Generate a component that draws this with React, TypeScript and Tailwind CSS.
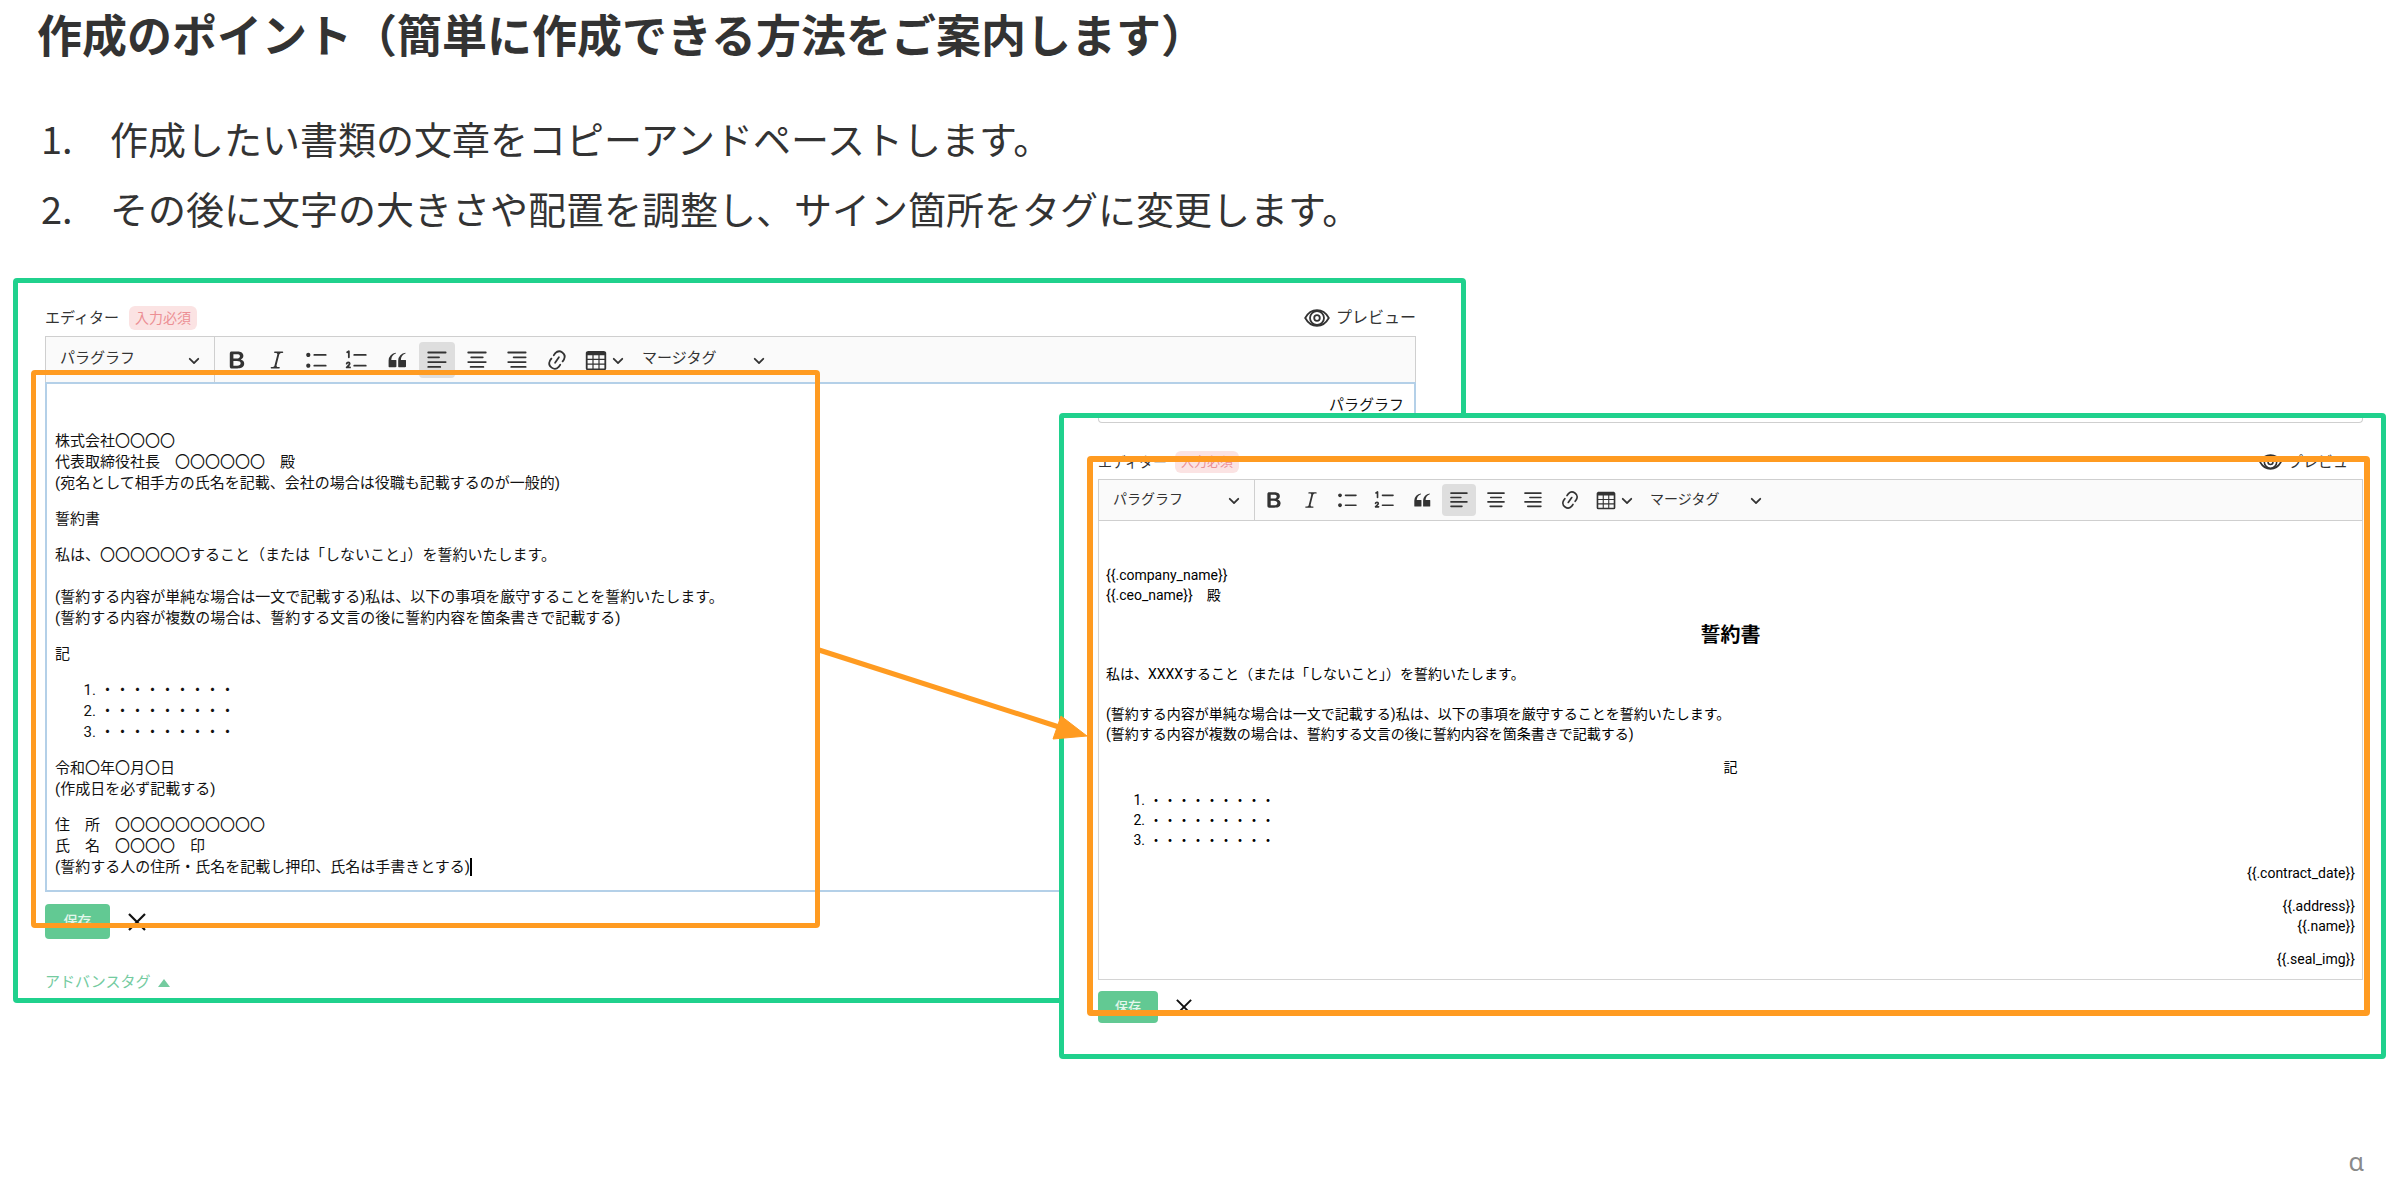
import React from 'react';

type Size = 'lg' | 'md';

const iconPaths = {
  bold: 'M10.187 17H5.773c-.637 0-1.092-.138-1.364-.415-.273-.277-.409-.718-.409-1.323V4.738c0-.617.14-1.062.419-1.332.279-.27.73-.406 1.354-.406h4.68c.69 0 1.288.041 1.793.124.506.083.96.242 1.36.477.341.197.644.447.906.75a3.262 3.262 0 0 1 .808 2.162c0 1.401-.722 2.426-2.167 3.075C15.05 10.175 16 11.315 16 13.01a3.756 3.756 0 0 1-2.296 3.504 6.1 6.1 0 0 1-1.517.377c-.571.073-1.238.11-2 .11zm-.217-6.217H7v4.087h3.069c1.977 0 2.965-.69 2.965-2.072 0-.707-.256-1.22-.768-1.537-.512-.319-1.277-.478-2.296-.478zM7 5.13v3.619h2.606c.729 0 1.292-.067 1.69-.2a1.6 1.6 0 0 0 .91-.765c.165-.267.247-.566.247-.897 0-.707-.26-1.176-.778-1.409-.519-.232-1.31-.348-2.375-.348H7z',
  italic: 'M9.586 14.633l.021.004c-.036.335.095.655.393.962.082.083.173.15.274.201h1.474a.6.6 0 1 1 0 1.2H5.304a.6.6 0 0 1 0-1.2h1.15c.474-.07.809-.182 1.005-.334.157-.122.291-.32.404-.597l2.416-9.55a1.053 1.053 0 0 0-.281-.823 1.12 1.12 0 0 0-.442-.296H8.15a.6.6 0 0 1 0-1.2h6.443a.6.6 0 1 1 0 1.2h-1.195c-.376.056-.65.155-.823.296-.215.175-.423.439-.623.79l-2.366 9.347z',
  bullets: 'M7 5.75c0 .414.336.75.75.75h9.5a.75.75 0 1 0 0-1.5h-9.5a.75.75 0 0 0-.75.75zm-6 0C1 4.784 1.777 4 2.75 4c.966 0 1.75.777 1.75 1.75 0 .966-.777 1.75-1.75 1.75C1.784 7.5 1 6.723 1 5.75zm6 9c0 .414.336.75.75.75h9.5a.75.75 0 1 0 0-1.5h-9.5a.75.75 0 0 0-.75.75zm-6 0c0-.966.777-1.75 1.75-1.75.966 0 1.75.777 1.75 1.75 0 .966-.777 1.75-1.75 1.75-.966 0-1.75-.777-1.75-1.75z',
  quote: 'M3 10.423a6.5 6.5 0 0 1 6.056-6.408l.038.67C6.448 5.423 5.354 7.663 5.22 10H9c.552 0 .5.432.5.986v4.511c0 .554-.448.503-1 .503h-5c-.552 0-.5-.449-.5-1.003v-4.574zm8 0a6.5 6.5 0 0 1 6.056-6.408l.038.67c-2.646.739-3.74 2.979-3.873 5.315H17c.552 0 .5.432.5.986v4.511c0 .554-.448.503-1 .503h-5c-.552 0-.5-.449-.5-1.003v-4.574z',
  link: 'm11.077 15 .991-1.416a.75.75 0 1 1 1.229.86l-1.148 1.64a.748.748 0 0 1-.217.206 5.251 5.251 0 0 1-8.503-5.955.741.741 0 0 1 .12-.274l1.147-1.639a.75.75 0 1 1 1.228.86L4.933 10.7l.006.003a3.75 3.75 0 0 0 6.132 4.294l.006.004zm5.494-5.335a.748.748 0 0 1-.12.274l-1.147 1.639a.75.75 0 1 1-1.228-.86l.86-1.23a3.75 3.75 0 0 0-6.144-4.301l-.86 1.229a.75.75 0 0 1-1.229-.86l1.148-1.64a.748.748 0 0 1 .217-.206 5.251 5.251 0 0 1 8.503 5.955zm-4.563-2.532a.75.75 0 0 1 .184 1.045l-3.155 4.505a.75.75 0 1 1-1.229-.86l3.155-4.506a.75.75 0 0 1 1.045-.184z',
  table: 'M3 6v3h4V6H3zm0 4v3h4v-3H3zm0 4v3h4v-3H3zm5 3h4v-3H8v3zm5 0h4v-3h-4v3zm4-4v-3h-4v3h4zm0-4V6h-4v3h4zm1.5 8a1.5 1.5 0 0 1-1.5 1.5H3A1.5 1.5 0 0 1 1.5 17V4c.222-.863 1.068-1.5 2-1.5h13c.932 0 1.778.637 2 1.5v13zM12 13v-3H8v3h4zm0-4V6H8v3h4z',
};

const iconStrokes = {
  numbers: 'M7.7 5.75h9.6M7.7 14.75h9.6M1.8 3.6l1.4-.9v5M1.4 13c.3-1.3 2.5-1.3 2.5.1 0 1.1-1.6 1.9-2.5 3.1h2.8',
  left: 'M2.7 3.75h14.5M2.7 7.75h9M2.7 11.75h14.5M2.7 15.75h10',
  center: 'M2.7 3.75h14.6M5.2 7.75h9.6M2.7 11.75h14.6M4.7 15.75h10.6',
  right: 'M2.7 3.75h14.5M7.2 7.75h10M2.7 11.75h14.5M5.2 15.75h12',
};

const tools = [
  { label: '太字', path: iconPaths.bold },
  { label: '斜体', path: iconPaths.italic },
  { label: '箇条書き', path: iconPaths.bullets },
  { label: '番号付きリスト', stroke: iconStrokes.numbers },
  { label: '引用', path: iconPaths.quote },
  { label: '左揃え', stroke: iconStrokes.left, active: true },
  { label: '中央揃え', stroke: iconStrokes.center },
  { label: '右揃え', stroke: iconStrokes.right },
  { label: 'リンク', path: iconPaths.link },
];

const Icon: React.FC<{ path?: string; stroke?: string; size: Size }> = ({ path, stroke, size }) => (
  <svg viewBox="0 0 20 20" className={size === 'lg' ? 'size-6 shrink-0' : 'size-[22px] shrink-0'} aria-hidden="true">
    {path && <path d={path} fill="currentColor" />}
    {stroke && (
      <path d={stroke} fill="none" stroke="currentColor" strokeWidth="1.5" strokeLinecap="round" strokeLinejoin="round" />
    )}
  </svg>
);

const Chevron: React.FC<{ className?: string }> = ({ className = '' }) => (
  <svg viewBox="0 0 10 10" className={`pointer-events-none size-3 shrink-0 ${className}`} aria-hidden="true">
    <path
      d="M.941 4.523a.75.75 0 1 1 1.06-1.06l3.006 3.005 3.005-3.005a.75.75 0 1 1 1.06 1.06l-3.549 3.55a.75.75 0 0 1-1.168-.136L.941 4.523z"
      fill="currentColor"
    />
  </svg>
);

const EyeIcon: React.FC<{ size: Size }> = ({ size }) => (
  <svg
    viewBox="0 0 26 18"
    className={size === 'lg' ? 'h-[18px] w-[26px]' : 'h-4 w-[23px]'}
    fill="none"
    stroke="currentColor"
    strokeWidth="1.8"
    aria-hidden="true"
  >
    <path d="M1.2 9C4 3.900 8 1.200 13 1.200S22 3.900 24.800 9C22 14.100 18 16.800 13 16.800S4 14.100 1.200 9z" />
    <circle cx="13" cy="9" r="7" />
    <circle cx="13" cy="9" r="2.800" />
  </svg>
);

const EditorHeader: React.FC<{ size: Size }> = ({ size }) => (
  <div className="flex items-center justify-between text-[#333]">
    <div className="flex items-center">
      <span className={size === 'lg' ? 'w-[84px] text-[15px] leading-6' : 'w-[77px] text-[14px] leading-[22px]'}>
        エディター
      </span>
      <span
        className={
          size === 'lg'
            ? 'rounded-md bg-[#fbe3e3] px-[6px] text-[14px] leading-6 text-[#ec8f94]'
            : 'rounded-md bg-[#fbe3e3] px-[6px] text-[13px] leading-[22px] text-[#ec8f94]'
        }
      >
        入力必須
      </span>
    </div>
    <button
      type="button"
      className={size === 'lg' ? 'flex items-center gap-[6px] text-[16px] leading-6' : 'flex items-center gap-[6px] text-[15px] leading-[22px]'}
    >
      <EyeIcon size={size} />
      プレビュー
    </button>
  </div>
);

const Toolbar: React.FC<{ size: Size }> = ({ size }) => {
  const lg = size === 'lg';
  return (
    <div
      className={
        lg
          ? 'flex h-[46px] items-center border border-b-0 border-[#cfcfcf] bg-[#fafafa] text-[15px] text-[#333]'
          : 'flex h-[42px] items-center border border-[#cfcfcf] bg-[#fafafa] text-[14px] text-[#333]'
      }
    >
      <div className={lg ? 'relative flex h-full w-[169px] border-r border-[#cfcfcf]' : 'relative flex h-full w-[156px] border-r border-[#cfcfcf]'}>
        <select aria-label="段落スタイル" className="w-full appearance-none pb-[2px] pl-[14px]">
          <option>パラグラフ</option>
        </select>
        <Chevron className="absolute top-1/2 right-[14px] -translate-y-1/2" />
      </div>
      <div className={lg ? 'flex items-center gap-1 pl-1' : 'flex items-center gap-[3px] pl-[2px]'}>
        {tools.map((tool) => (
          <button
            key={tool.label}
            type="button"
            aria-label={tool.label}
            className={`flex items-center justify-center rounded-sm ${lg ? 'h-9 w-9' : 'h-8 w-[34px]'} ${
              tool.active ? 'bg-[#dedede]' : ''
            }`}
          >
            <Icon path={tool.path} stroke={tool.stroke} size={size} />
          </button>
        ))}
        <button type="button" aria-label="表" className="flex items-center gap-1 pr-1 pl-[5px]">
          <Icon path={iconPaths.table} size={size} />
          <Chevron />
        </button>
        <div className={lg ? 'relative flex h-9 w-[137px]' : 'relative flex h-8 w-[126px]'}>
          <select aria-label="マージタグ" className="w-full appearance-none pb-[2px] pl-[10px]">
            <option>マージタグ</option>
          </select>
          <Chevron className="absolute top-1/2 right-1 -translate-y-1/2" />
        </div>
      </div>
    </div>
  );
};

const Actions: React.FC<{ size: Size }> = ({ size }) => (
  <div className="flex items-center gap-[18px]">
    <button
      type="button"
      className={
        size === 'lg'
          ? 'h-[35px] w-[65px] rounded-sm bg-[#62c993] text-[14px] font-medium text-[#e4f7ec]'
          : 'h-8 w-[60px] rounded-sm bg-[#62c993] text-[13px] font-medium text-[#e4f7ec]'
      }
    >
      保存
    </button>
    <button type="button" aria-label="閉じる">
      <svg viewBox="0 0 18 18" className={size === 'lg' ? 'size-[18px]' : 'size-4'} stroke="#111" strokeWidth="2.2">
        <path d="M1 1l16 16M17 1L1 17" />
      </svg>
    </button>
  </div>
);

const NumberedDots: React.FC<{ size: Size }> = ({ size }) => (
  <ol>
    {[1, 2, 3].map((n) => (
      <li key={n} className="flex">
        <span className={size === 'lg' ? 'w-[41px] text-right' : 'w-[39px] text-right'}>{n}.</span>
        <span className="pl-1">・・・・・・・・・</span>
      </li>
    ))}
  </ol>
);

const SourcePanel: React.FC = () => (
  <div className="relative col-start-1 col-end-3 row-start-1 self-start rounded-sm border-[5px] border-[#20d18d] bg-white pt-[23px] pr-[45px] pb-[5px] pl-[27px]">
    <EditorHeader size="lg" />
    <div className="mt-[6px]">
      <Toolbar size="lg" />
      <div className="flex flex-col gap-[15px] border-2 border-[#b4d0e8] px-[8px] pt-[11px] pb-[12px] text-[15px] leading-[21px] text-[#111]">
        <p className="pr-[2px] text-right">パラグラフ</p>
        <p>
          株式会社〇〇〇〇
          <br />
          代表取締役社長　〇〇〇〇〇〇　殿
          <br />
          (宛名として相手方の氏名を記載、会社の場合は役職も記載するのが一般的)
        </p>
        <p>誓約書</p>
        <p>
          私は、〇〇〇〇〇〇すること（または「しないこと」）を誓約いたします。
          <br />
          <br />
          (誓約する内容が単純な場合は一文で記載する)私は、以下の事項を厳守することを誓約いたします。
          <br />
          (誓約する内容が複数の場合は、誓約する文言の後に誓約内容を箇条書きで記載する)
        </p>
        <p>記</p>
        <NumberedDots size="lg" />
        <p>
          令和〇年〇月〇日
          <br />
          (作成日を必ず記載する)
        </p>
        <p>
          住　所　〇〇〇〇〇〇〇〇〇〇
          <br />
          氏　名　〇〇〇〇　印
          <br />
          <span className="border-r-2 border-black">(誓約する人の住所・氏名を記載し押印、氏名は手書きとする)</span>
        </p>
      </div>
    </div>
    <div className="mt-[12px]">
      <Actions size="lg" />
    </div>
    <button type="button" className="mt-[33px] flex items-center gap-[8px] text-[15px] leading-[21px] text-[#74cb9f]">
      アドバンスタグ
      <svg viewBox="0 0 12 8" className="h-2 w-3" fill="currentColor" aria-hidden="true">
        <path d="M6 0l6 8H0z" />
      </svg>
    </button>
    {/* highlight frame */}
    <div className="pointer-events-none absolute top-[87px] left-[13px] h-[558px] w-[789px] rounded-sm border-[5px] border-[#ff9b21]" />
  </div>
);

const ResultPanel: React.FC = () => (
  <div className="relative col-start-2 col-end-4 row-start-1 mt-[135px] self-start rounded-sm border-[5px] border-[#20d18d] bg-white pr-[18px] pb-[31px] pl-[34px]">
    <div className="h-[5px] rounded-b-sm border border-t-0 border-[#cfcfcf]" />
    <div className="mt-[28px]">
      <EditorHeader size="md" />
    </div>
    <div className="mt-[6px]">
      <Toolbar size="md" />
      <div className="flex flex-col gap-[13px] border border-t-0 border-[#d4d4d4] px-[7px] pt-[44px] pb-[10px] text-[14px] leading-5 text-black">
        <p>
          {'{{.company_name}}'}
          <br />
          {'{{.ceo_name}}'}　殿
        </p>
        <h2 className="mt-[3px] mb-[2px] text-center text-[20px] leading-7 font-bold">誓約書</h2>
        <p>
          私は、XXXXすること（または「しないこと」）を誓約いたします。
          <br />
          <br />
          (誓約する内容が単純な場合は一文で記載する)私は、以下の事項を厳守することを誓約いたします。
          <br />
          (誓約する内容が複数の場合は、誓約する文言の後に誓約内容を箇条書きで記載する)
        </p>
        <p className="text-center">記</p>
        <NumberedDots size="md" />
        <p className="text-right">{'{{.contract_date}}'}</p>
        <p className="text-right">
          {'{{.address}}'}
          <br />
          {'{{.name}}'}
        </p>
        <p className="text-right">{'{{.seal_img}}'}</p>
      </div>
    </div>
    <div className="mt-[11px]">
      <Actions size="md" />
    </div>
    {/* highlight frame */}
    <div className="pointer-events-none absolute top-[38px] right-[11px] bottom-[38px] left-[23px] rounded-sm border-[6px] border-[#ff9b21]" />
  </div>
);

export default function App() {
  return (
    <main className="bg-white font-['Roboto','Noto_Sans_CJK_JP',sans-serif] text-[#333]">
      <h1 className="pt-[6px] pl-[37px] font-['Noto_Sans_CJK_JP',sans-serif] text-[45px] leading-[56px] font-bold">
        作成のポイント（簡単に作成できる方法をご案内します）
      </h1>
      <ol className="mt-[41px] pl-[41px] font-['Noto_Sans_CJK_JP',sans-serif] text-[38px] leading-[70px]">
        <li className="flex">
          <span className="w-[69px]">1.</span>作成したい書類の文章をコピーアンドペーストします。
        </li>
        <li className="flex">
          <span className="w-[69px]">2.</span>その後に文字の大きさや配置を調整し、サイン箇所をタグに変更します。
        </li>
      </ol>
      <section className="relative mt-[35px] grid grid-cols-[1046fr_407fr_920fr] pr-[14px] pl-[13px]">
        <SourcePanel />
        <ResultPanel />
        <svg
          viewBox="0 0 268 100"
          className="pointer-events-none absolute top-[367px] left-[819px] h-[100px] w-[268px]"
          aria-hidden="true"
        >
          <path d="M0 5l240 77" stroke="#ff9b21" strokeWidth="5" fill="none" />
          <path d="M268 91l-26-20-8 23z" fill="#ff9b21" stroke="#ff9b21" strokeWidth="1" />
        </svg>
      </section>
      <footer className="mt-[87px] flex justify-end pr-[36px] font-['Noto_Sans',sans-serif] text-[25px] leading-[30px] text-[#8a8a8a]">
        ɑ
      </footer>
    </main>
  );
}
